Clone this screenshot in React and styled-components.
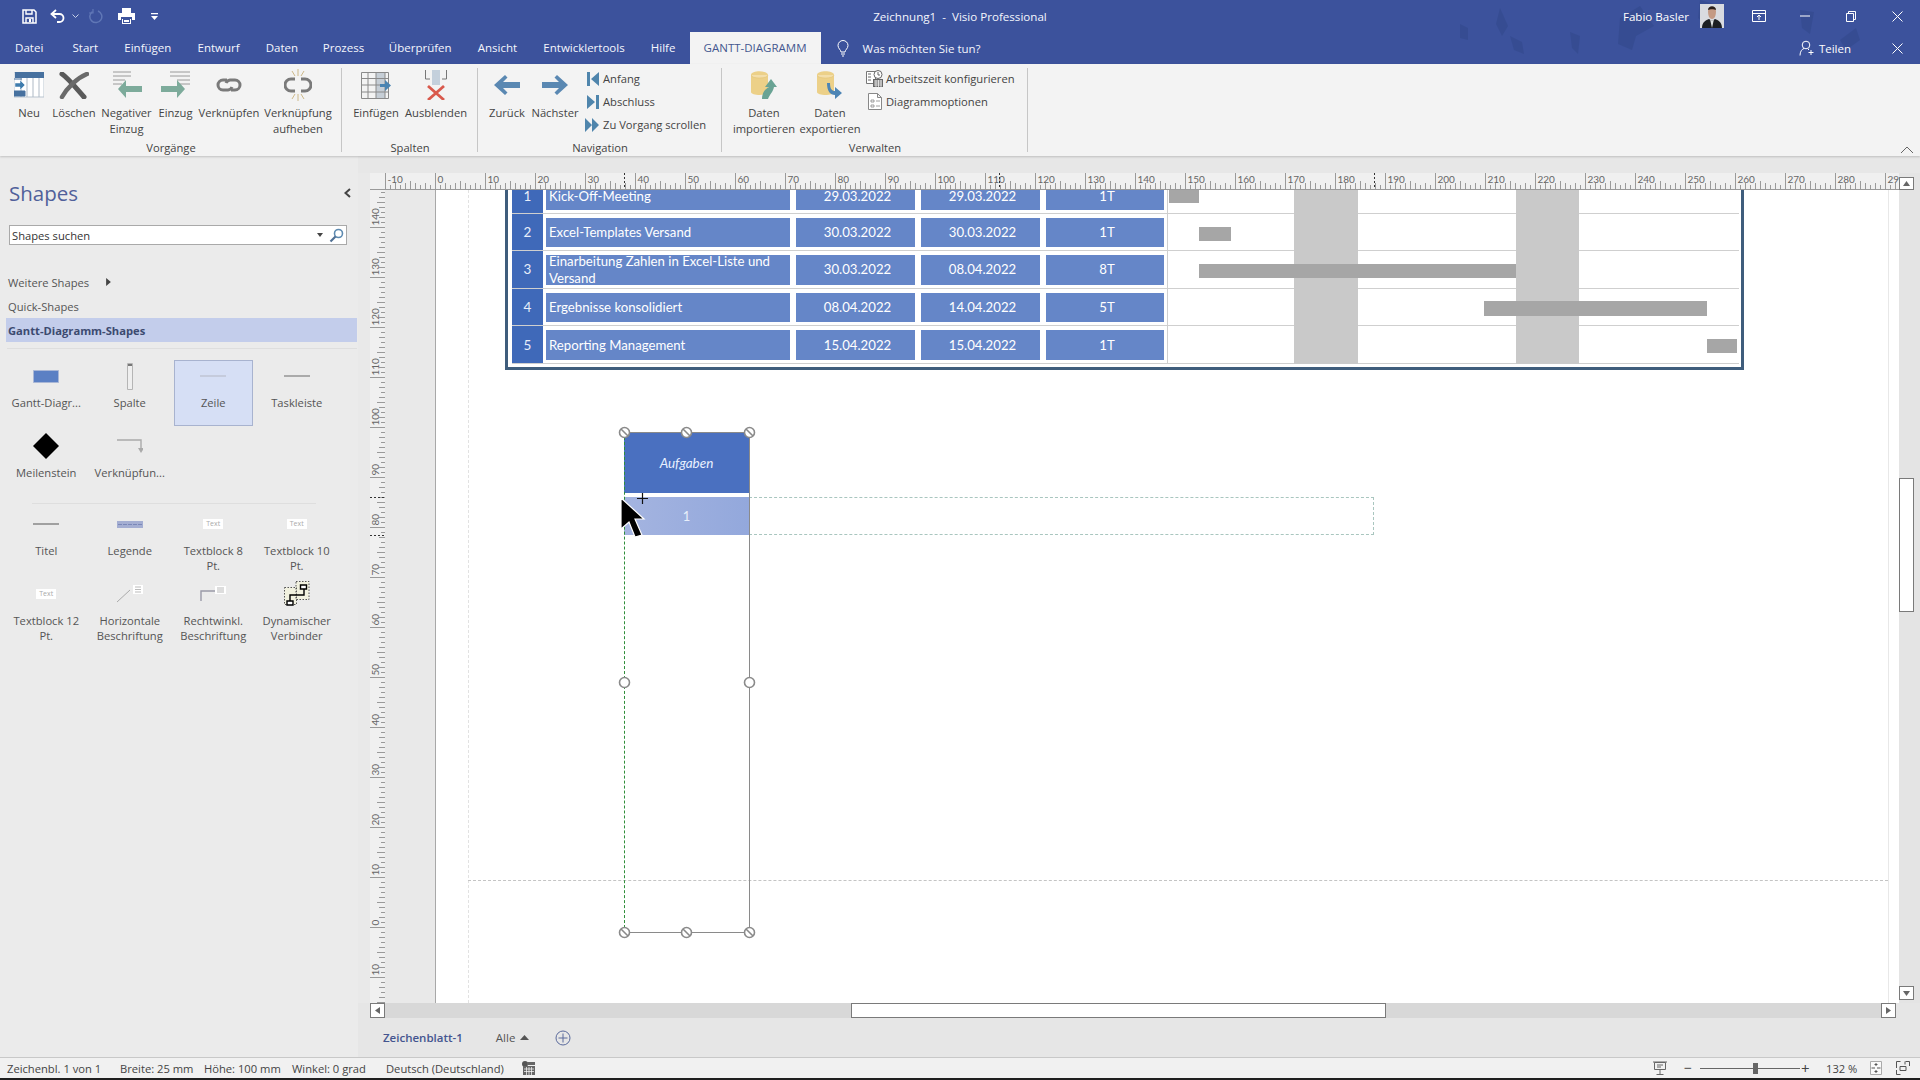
import React from 'react';
import styled, { createGlobalStyle } from 'styled-components';

const GlobalStyle = createGlobalStyle`
  html, body { margin: 0; padding: 0; background: #eaeaea; }
  * { box-sizing: border-box; }
  svg { display: block; }
`;

const UI_FONT = `"Open Sans", "Noto Sans", "Liberation Sans", sans-serif`;
const SHEET_FONT = `Lato, "Open Sans", "Liberation Sans", sans-serif`;

const tabs = ['Datei', 'Start', 'Einfügen', 'Entwurf', 'Daten', 'Prozess', 'Überprüfen', 'Ansicht', 'Entwicklertools', 'Hilfe'];

const rows = [
  { no: 1, name: 'Kick-Off-Meeting', from: '29.03.2022', to: '29.03.2022', dur: '1T' },
  { no: 2, name: 'Excel-Templates Versand', from: '30.03.2022', to: '30.03.2022', dur: '1T' },
  { no: 3, name: 'Einarbeitung Zahlen in Excel-Liste und Versand', from: '30.03.2022', to: '08.04.2022', dur: '8T' },
  { no: 4, name: 'Ergebnisse konsolidiert', from: '08.04.2022', to: '14.04.2022', dur: '5T' },
  { no: 5, name: 'Reporting Management', from: '15.04.2022', to: '15.04.2022', dur: '1T' },
];

// bars and weekend columns, measured from the inner edge of the frame
const shades = [{ x: 786, w: 64 }, { x: 1008, w: 63 }];
const bars = [
  { x: 661, y: 0, w: 30, h: 27 },
  { x: 691, y: 51, w: 32, h: 14 },
  { x: 691, y: 88, w: 317, h: 14 },
  { x: 976, y: 125, w: 223, h: 15 },
  { x: 1199, y: 163, w: 30, h: 14 },
];

const handles = [
  { x: 239, y: 242, locked: true }, { x: 301, y: 242, locked: true }, { x: 364, y: 242, locked: true },
  { x: 239, y: 492 }, { x: 364, y: 492 },
  { x: 239, y: 742, locked: true }, { x: 301, y: 742, locked: true }, { x: 364, y: 742, locked: true },
];

const App = () => (
  <Page>
    <GlobalStyle />
    <Header>
      <Birds width="470" height="64" viewBox="0 0 470 64">
        <g fill="#2f4688" opacity="0.45">
          <path d="M50 8l8 18-6 10-6-12z" /><path d="M10 24l8 4 0 12-8-2z" />
          <path d="M60 36l12 6 2 12-10-4z" /><path d="M120 32l10 4-2 18-6-6z" />
          <path d="M170 18l20-12 14 20-18 10-4 14-14-6z" /><path d="M250 0l14 4-6 22-10-8z" />
          <path d="M350 10l14 2-4 22-8-6z" /><path d="M390 40l16-12 4 12-14 10z" />
        </g>
      </Birds>
      <TitleBar>
        <Qat>
          <QatSlot $ml={0} $w={18}><SaveIcon /></QatSlot>
          <QatSlot $ml={11} $w={18}><UndoIcon /></QatSlot>
          <QatSlot $ml={3} $w={10}><Chevron /></QatSlot>
          <QatSlot $ml={7} $w={18}><RedoIcon /></QatSlot>
          <QatSlot $ml={12} $w={18}><PrintIcon /></QatSlot>
          <QatSlot $ml={14} $w={10}><QatMenu /></QatSlot>
        </Qat>
        <WindowTitle>Zeichnung1  -  Visio Professional</WindowTitle>
        <WindowControls>
          <UserName>Fabio Basler</UserName>
          <AvatarPicture />
          <WinButton $ml={28}><RibbonDisplayIcon /></WinButton>
          <WinButton $ml={32}><MinimizeIcon /></WinButton>
          <WinButton $ml={32}><RestoreIcon /></WinButton>
          <WinButton $ml={32}><CloseIcon /></WinButton>
        </WindowControls>
      </TitleBar>
      <TabBar>
        {tabs.map((t) => <Tab key={t}>{t}</Tab>)}
        <ActiveTab>GANTT-DIAGRAMM</ActiveTab>
        <TellMe><BulbIcon />Was möchten Sie tun?</TellMe>
        <ShareButton><ShareIcon />Teilen</ShareButton>
        <WinButton $ml={39}><CloseIcon /></WinButton>
      </TabBar>
    </Header>

    <Ribbon>
      <Group $w={342} $pl={6}>
        <GroupBody>
          <RibbonButton w={46} label="Neu" icon={<NewIcon />} />
          <RibbonButton w={44} label="Löschen" icon={<DeleteIcon />} />
          <RibbonButton w={61} label={<>Negativer<br />Einzug</>} icon={<OutdentIcon />} />
          <RibbonButton w={37} label="Einzug" icon={<IndentIcon />} />
          <RibbonButton w={70} label="Verknüpfen" icon={<LinkIcon />} />
          <RibbonButton w={68} label={<>Verknüpfung<br />aufheben</>} icon={<UnlinkIcon />} />
        </GroupBody>
        <GroupLabel $pl={6}>Vorgänge</GroupLabel>
      </Group>
      <Group $w={136} $pl={2}>
        <GroupBody>
          <RibbonButton w={64} label="Einfügen" icon={<InsertColumnIcon />} />
          <RibbonButton w={56} label="Ausblenden" icon={<HideColumnIcon />} />
        </GroupBody>
        <GroupLabel $pl={2}>Spalten</GroupLabel>
      </Group>
      <Group $w={244} $pl={6}>
        <GroupBody>
          <RibbonButton w={46} label="Zurück" icon={<BigArrow flip />} />
          <RibbonButton w={50} label="Nächster" icon={<BigArrow />} />
          <Stack $ml={7}>
            <StackItem><StartIcon />Anfang</StackItem>
            <StackItem><FinishIcon />Abschluss</StackItem>
            <StackItem><ScrollIcon />Zu Vorgang scrollen</StackItem>
          </Stack>
        </GroupBody>
        <GroupLabel $pl={6}>Navigation</GroupLabel>
      </Group>
      <Group $w={306} $pl={8}>
        <GroupBody>
          <RibbonButton w={68} label={<>Daten<br />importieren</>} icon={<ImportIcon />} />
          <RibbonButton w={64} label={<>Daten<br />exportieren</>} icon={<ExportIcon />} />
          <Stack $ml={4}>
            <StackItem><WorkTimeIcon />Arbeitszeit konfigurieren</StackItem>
            <StackItem><OptionsIcon />Diagrammoptionen</StackItem>
          </Stack>
        </GroupBody>
        <GroupLabel $pl={8}>Verwalten</GroupLabel>
      </Group>
      <CollapseRibbon>
        <svg width="14" height="8" viewBox="0 0 14 8"><path d="M1 7l6-6 6 6" fill="none" stroke="#666" /></svg>
      </CollapseRibbon>
    </Ribbon>

    <Body>
      <Sidebar>
        <SidebarHead>
          <SidebarTitle>Shapes</SidebarTitle>
          <svg width="10" height="10" viewBox="0 0 10 10"><path d="M7 1L2.500 5 7 9" fill="none" stroke="#444" strokeWidth="2" /></svg>
        </SidebarHead>
        <SearchBox>
          <span>Shapes suchen</span>
          <SearchTools>
            <svg width="6" height="4" viewBox="0 0 6 4"><path d="M0 0h6L3 4z" fill="#444" /></svg>
            <svg width="15" height="15" viewBox="0 0 15 15"><circle cx="9.500" cy="5.500" r="4" fill="none" stroke="#5d8ab0" strokeWidth="1.600" /><path d="M6.500 8.500L1.500 13.500" stroke="#4f6f93" strokeWidth="2.200" /></svg>
          </SearchTools>
        </SearchBox>
        <NavRow $first>Weitere Shapes<MoreArrow viewBox="0 0 6 10"><path d="M0 0l6 5-6 5z" fill="#444" /></MoreArrow></NavRow>
        <NavRow>Quick-Shapes</NavRow>
        <NavRow $active>Gantt-Diagramm-Shapes</NavRow>
        <Divider />
        <StencilGrid>
          <Stencil label="Gantt-Diagr..."><RectShape /></Stencil>
          <Stencil label="Spalte"><ColumnShape /></Stencil>
          <Stencil label="Zeile" selected><LineShape color="#c5cbdc" /></Stencil>
          <Stencil label="Taskleiste"><LineShape color="#aaa" /></Stencil>
          <Stencil label="Meilenstein"><Diamond /></Stencil>
          <Stencil label="Verknüpfun..."><ElbowShape /></Stencil>
        </StencilGrid>
        <InnerDivider />
        <StencilGrid>
          <Stencil label="Titel"><LineShape color="#a0a0a0" /></Stencil>
          <Stencil label="Legende"><LegendShape /></Stencil>
          <Stencil label={<>Textblock 8<br />Pt.</>}><TextChip>Text</TextChip></Stencil>
          <Stencil label={<>Textblock 10<br />Pt.</>}><TextChip>Text</TextChip></Stencil>
          <Stencil label={<>Textblock 12<br />Pt.</>}><TextChip>Text</TextChip></Stencil>
          <Stencil label="Horizontale Beschriftung"><CalloutLine /></Stencil>
          <Stencil label="Rechtwinkl. Beschriftung"><CalloutElbow /></Stencil>
          <Stencil label="Dynamischer Verbinder"><ConnectorShape /></Stencil>
        </StencilGrid>
      </Sidebar>

      <Workspace>
        <TopBand />
        <DrawingArea>
          <Gutter />
          <RulerCorner />
          <HRulerBox><HorizontalRuler /></HRulerBox>
          <VScroll>
            <ScrollButton $h={13} $mt={4}><svg width="7" height="5" viewBox="0 0 7 5"><path d="M0 5l3.500-5L7 5z" fill="#666" /></svg></ScrollButton>
            <VThumb />
            <ScrollButton $h={14} $mt="auto" $mb={3}><svg width="7" height="5" viewBox="0 0 7 5"><path d="M0 0l3.500 5L7 0z" fill="#666" /></svg></ScrollButton>
          </VScroll>
          <VRulerBox><VerticalRuler /></VRulerBox>
          <Canvas>
            <Sheet />
            <PageLineV />
            <PageEdgeV />
            <PageLineH />
            <GanttFrame>
              {rows.map((r) => (
                <GanttRow key={r.no}>
                  <NumberCell>{r.no}</NumberCell>
                  <NameCell>{r.name}</NameCell>
                  <DataCell>{r.from}</DataCell>
                  <DataCell>{r.to}</DataCell>
                  <DataCell>{r.dur}</DataCell>
                  <ChartCell />
                </GanttRow>
              ))}
              {shades.map((s) => <Weekend key={s.x} $x={s.x} $w={s.w} />)}
              {bars.map((b) => <TaskBar key={b.x} $x={b.x} $y={b.y} $w={b.w} $h={b.h} />)}
            </GanttFrame>
            <ShapeHeader>Aufgaben</ShapeHeader>
            <ShapeRow>1</ShapeRow>
            <DropHint />
            <Selection />
            {handles.map((h) => (
              <Handle key={`${h.x}-${h.y}`} $x={h.x} $y={h.y} width="13" height="13" viewBox="0 0 13 13">
                <circle cx="6.500" cy="6.500" r="5" fill="#fff" stroke="#8a8a8a" strokeWidth="1.600" />
                {h.locked && <path d="M3 3l7 7" stroke="#8a8a8a" strokeWidth="1.600" />}
              </Handle>
            ))}
            <DragPlus width="11" height="11" viewBox="0 0 11 11"><path d="M5.500 0v11M0 5.500h11" stroke="#111" strokeWidth="1.200" /></DragPlus>
            <Cursor width="26" height="42" viewBox="0 0 26 42">
              <path d="M1 1v31l8-7 6 15 7-2-7-16h9z" fill="#000" stroke="#fff" strokeWidth="1.200" />
            </Cursor>
          </Canvas>
        </DrawingArea>
        <HScroll>
          <ScrollButton $w={15}><svg width="5" height="7" viewBox="0 0 5 7"><path d="M5 0L0 3.500 5 7z" fill="#666" /></svg></ScrollButton>
          <HThumb />
          <ScrollButton $w={15} $ml="auto"><svg width="5" height="7" viewBox="0 0 5 7"><path d="M0 0l5 3.500L0 7z" fill="#666" /></svg></ScrollButton>
        </HScroll>
        <SheetTabs>
          <SheetTab>Zeichenblatt-1</SheetTab>
          <AllTab>Alle<svg width="9" height="5" viewBox="0 0 9 5"><path d="M0 5l4.500-5L9 5z" fill="#555" /></svg></AllTab>
          <AddSheet width="16" height="16" viewBox="0 0 16 16">
            <circle cx="8" cy="8" r="7" fill="none" stroke="#5a6a9c" />
            <path d="M8 3.500v9M3.500 8h9" stroke="#5a6a9c" />
          </AddSheet>
        </SheetTabs>
      </Workspace>
    </Body>

    <StatusBar>
      <StatusText $w={113}>Zeichenbl. 1 von 1</StatusText>
      <StatusText $w={84}>Breite: 25 mm</StatusText>
      <StatusText $w={88}>Höhe: 100 mm</StatusText>
      <StatusText $w={94}>Winkel: 0 grad</StatusText>
      <StatusText $w={135}>Deutsch (Deutschland)</StatusText>
      <MacroIcon />
      <StatusRight>
        <PresentIcon />
        <ZoomMinus>−</ZoomMinus>
        <ZoomSlider><ZoomThumb /></ZoomSlider>
        <ZoomPlus>+</ZoomPlus>
        <ZoomValue>132 %</ZoomValue>
        <FitIcon />
        <SwitchIcon />
      </StatusRight>
    </StatusBar>
    <BottomEdge />
  </Page>
);

const RibbonButton = ({ w, label, icon }) => (
  <RibbonBtn $w={w}>
    <IconSlot>{icon}</IconSlot>
    <BtnLabel>{label}</BtnLabel>
  </RibbonBtn>
);

const Stencil = ({ label, selected, children }) => (
  <StencilCell $selected={selected}>
    <StencilIcon>{children}</StencilIcon>
    <StencilLabel>{label}</StencilLabel>
  </StencilCell>
);

const HorizontalRuler = () => {
  const ticks = [];
  for (let i = 0; i <= 303; i++) {
    const x = i * 5 + 0.5;
    const major = i % 10 === 0;
    const h = major ? 17 : i % 5 === 0 ? 9 : i % 2 === 0 ? 7 : 5;
    ticks.push(<path key={i} d={`M${x} 17v-${h}`} stroke="#9a9a9a" strokeWidth="1" />);
    if (major) {
      ticks.push(<RulerText key={`t${i}`} x={x + 2} y="10">{i - 10}</RulerText>);
    }
  }
  return (
    <svg width="1514" height="17" viewBox="0 0 1514 17">
      {ticks}
      {[239, 614, 989].map((x) => <path key={x} d={`M${x + 0.5} 0v17`} stroke="#333" strokeDasharray="2 2" />)}
    </svg>
  );
};

const VerticalRuler = () => {
  const ticks = [];
  for (let v = -15; v <= 147; v += 1) {
    const y = 737 - v * 5 + 0.5;
    const major = v % 10 === 0;
    const w = major ? 15 : v % 5 === 0 ? 8 : v % 2 === 0 ? 6 : 4;
    ticks.push(<path key={v} d={`M15 ${y}h-${w}`} stroke="#9a9a9a" strokeWidth="1" />);
    if (major) {
      ticks.push(<RulerText key={`t${v}`} transform={`translate(9 ${y - 2}) rotate(-90)`}>{Math.abs(v)}</RulerText>);
    }
  }
  return (
    <svg width="15" height="813" viewBox="0 0 15 813">
      {ticks}
      <path d="M0 307.500h15M0 345.500h15" stroke="#333" strokeDasharray="2 2" />
    </svg>
  );
};

const AvatarPicture = () => (
  <AvatarSvg width="24" height="24" viewBox="0 0 24 24">
    <path d="M0 0h24v24H0z" fill="#d9dbe0" />
    <path d="M2 24c0-6 4-8 7-9l3 2 3-2c3 1 7 3 7 9z" fill="#1c1f23" />
    <path d="M10 15l2 9 2-9-2 2z" fill="#dfe3e4" />
    <path d="M8 7c0-4 8-4 8 0 0 4-1 8-4 8s-4-4-4-8z" fill="#c49a84" />
    <path d="M8 6c0-5 8-5 8 0-2-1-6-1-8 0z" fill="#2a1f1a" />
  </AvatarSvg>
);

const SaveIcon = () => (
  <svg width="15" height="15" viewBox="0 0 15 15"><path d="M1 1h11l2 2v11H1z" fill="none" stroke="#fff" strokeWidth="1.500" /><path d="M4 1v4h6V1M4 14V9h7v5" fill="none" stroke="#fff" strokeWidth="1.400" /><path d="M7 10h2v3H7z" fill="#fff" /></svg>
);
const UndoIcon = () => (
  <svg width="16" height="15" viewBox="0 0 16 15"><path d="M3 5h6.500a4 4 0 0 1 0 8H7" fill="none" stroke="#fff" strokeWidth="1.800" /><path d="M6 1L1.500 5 6 9" fill="none" stroke="#fff" strokeWidth="1.800" /></svg>
);
const Chevron = () => (
  <svg width="7" height="4" viewBox="0 0 7 4"><path d="M.5.5l3 3 3-3" fill="none" stroke="#c6d0e8" /></svg>
);
const RedoIcon = () => (
  <svg width="14" height="15" viewBox="0 0 14 15"><path d="M9 2a6 6 0 1 1-5.500.6" fill="none" stroke="#6077b6" strokeWidth="1.500" /><path d="M4 0v4H0" fill="none" stroke="#6077b6" strokeWidth="1.200" /></svg>
);
const PrintIcon = () => (
  <svg width="17" height="16" viewBox="0 0 17 16"><path d="M4 0h9v5H4zM4 11h9v5H4z" fill="#fff" /><path d="M0 5h17v7h-3V9H3v3H0z" fill="#fff" /><path d="M5 11h7v4H5z" fill="#3c539c" /><path d="M6 12h5v2H6z" fill="#fff" /></svg>
);
const QatMenu = () => (
  <svg width="7" height="7" viewBox="0 0 7 7"><path d="M0 0h7v1.300H0zM0 3h7L3.500 7z" fill="#fff" /></svg>
);
const RibbonDisplayIcon = () => (
  <svg width="14" height="12" viewBox="0 0 14 12"><path d="M.5.5h13v11H.5zM.5 3.500h13M7 10V5M5 7l2-2 2 2" fill="none" stroke="#fff" /></svg>
);
const MinimizeIcon = () => (
  <svg width="10" height="2" viewBox="0 0 10 2"><path d="M0 1h10" stroke="#fff" /></svg>
);
const RestoreIcon = () => (
  <svg width="10" height="11" viewBox="0 0 10 11"><path d="M.5 2.500h7v8h-7zM2.500 2.500V.5h7v8h-2" fill="none" stroke="#fff" /></svg>
);
const CloseIcon = () => (
  <svg width="11" height="11" viewBox="0 0 11 11"><path d="M.5.5l10 10M10.500.5l-10 10" stroke="#fff" /></svg>
);
const BulbIcon = () => (
  <svg width="12" height="17" viewBox="0 0 12 17"><path d="M4 12c0-2-3-3.500-3-6.500a5 5 0 0 1 10 0C11 8.500 8 10 8 12zM4 14h4M5 16h2" fill="none" stroke="#fff" /></svg>
);
const ShareIcon = () => (
  <svg width="16" height="16" viewBox="0 0 16 16"><circle cx="7" cy="5" r="3.800" fill="none" stroke="#fff" /><path d="M1 15.500c0-4 2-6.500 4-7M9 9l1 1M12 10v5M9.500 12.500h5" fill="none" stroke="#fff" /></svg>
);

const NewIcon = () => (
  <svg width="30" height="26" viewBox="0 0 30 26">
    <path d="M0 0h30v25H0z" fill="#fff" stroke="#b9c4cf" />
    <path d="M1 0h29v6H1z" fill="#47719f" />
    <path d="M7 6v19M13 6v19M19 6v19M25 6v19" stroke="#aeb9c5" />
    <path d="M0 7h8M0 19h11v5H0z" fill="#47719f" stroke="#47719f" />
    <path d="M1 11h5V8l5 5-5 5v-3H1z" fill="#3f7cad" stroke="#fff" strokeWidth=".5" />
  </svg>
);
const DeleteIcon = () => (
  <svg width="30" height="27" viewBox="0 0 30 27"><path d="M3 2c6 4 14 14 22 23" fill="none" stroke="#5a5a5a" strokeWidth="5" strokeLinecap="round" /><path d="M28 2C18 6 8 16 3 25" fill="none" stroke="#6a6a6a" strokeWidth="4.500" strokeLinecap="round" /></svg>
);
const OutdentIcon = () => (
  <svg width="30" height="29" viewBox="0 0 30 29"><path d="M1 1h18M1 5h18M1 9h12M1 13h9" stroke="#9a9a9a" /><path d="M14 9l-8 9 8 9v-6h16v-6H14z" fill="#7dab9b" /></svg>
);
const IndentIcon = () => (
  <svg width="30" height="29" viewBox="0 0 30 29"><path d="M9 1h20M9 5h20M16 9h13M18 13h11" stroke="#9a9a9a" /><path d="M16 9l8 9-8 9v-6H0v-6h16z" fill="#7dab9b" /></svg>
);
const LinkIcon = () => (
  <svg width="28" height="16" viewBox="0 0 28 16"><path d="M12 3H8a5 5 0 0 0 0 10h5a5 5 0 0 0 4-3" fill="none" stroke="#7a7a7a" strokeWidth="3" /><path d="M16 13h4a5 5 0 0 0 0-10h-5a5 5 0 0 0-4 3" fill="none" stroke="#7a7a7a" strokeWidth="3" /></svg>
);
const UnlinkIcon = () => (
  <svg width="28" height="32" viewBox="0 0 28 32"><path d="M11 10H7a5.500 5.500 0 0 0 0 12h4M17 10h4a5.500 5.500 0 0 1 0 12h-4" fill="none" stroke="#7a7a7a" strokeWidth="3" /><path d="M14 0v7M8 2l3 5M20 2l-3 5M14 25v7M8 30l3-5M20 30l-3-5" stroke="#cdb98a" /></svg>
);
const InsertColumnIcon = () => (
  <svg width="30" height="27" viewBox="0 0 30 27">
    <path d="M15 1h9v25h-9z" fill="#c6ced6" />
    <path d="M.5.5h27v26H.5zM.5 6.500h27M.5 13h27M.5 20h27M7 .5v26M15 .5v26M24 .5v26" fill="none" stroke="#8a8a8a" />
    <path d="M19 12h5V8l6 5.500-6 5.500v-4h-5z" fill="#4a84b2" />
  </svg>
);
const HideColumnIcon = () => (
  <svg width="26" height="30" viewBox="0 0 26 30">
    <path d="M9 0h8v15H9z" fill="#c4d0dc" />
    <path d="M2.500 0v9H7M23.500 0v9H19" fill="none" stroke="#777" />
    <path d="M5 16l16 14M21 16L5 30" stroke="#d9594c" strokeWidth="2.800" />
  </svg>
);
const BigArrow = ({ flip }) => (
  <ArrowSvg $flip={flip} width="26" height="20" viewBox="0 0 26 20">
    <path d="M15 0l11 10-11 10-2.500-2.500L17 13H0V7h17l-4.500-4.500z" fill="#5a88b2" />
  </ArrowSvg>
);
const StartIcon = () => (
  <StackGlyph width="12" height="14" viewBox="0 0 12 14"><path d="M0 0h3v14H0zM12 0v14L4 7z" fill="#4f85ac" /></StackGlyph>
);
const FinishIcon = () => (
  <StackGlyph width="12" height="14" viewBox="0 0 12 14"><path d="M9 0h3v14H9zM0 0v14l8-7z" fill="#4f85ac" /></StackGlyph>
);
const ScrollIcon = () => (
  <StackGlyph $ml={-2} width="14" height="14" viewBox="0 0 14 14"><path d="M0 0v14l7-7zM7 0v14l7-7z" fill="#4f85ac" /></StackGlyph>
);
const Cylinder = () => (
  <>
    <path d="M0 4c0-5 17-5 17 0v17c0 4-17 4-17 0z" fill="#ecd088" />
    <path d="M0 4c0 4 17 4 17 0" fill="#f3deaa" stroke="#e2c374" strokeWidth=".6" />
  </>
);
const ImportIcon = () => (
  <svg width="26" height="30" viewBox="0 0 26 30"><g transform="translate(0 1)"><Cylinder /></g><path d="M11 29c0-6 3-10 7-12h-4l6-8 6 8h-3c-1 5-4 7-6 12z" fill="#69a394" /></svg>
);
const ExportIcon = () => (
  <svg width="26" height="30" viewBox="0 0 26 30"><g transform="translate(0 1)"><Cylinder /></g><path d="M13 13c0 6 2 8 5 8v-4l7 6-7 6v-4c-5 0-8-4-8-12z" fill="#4d85b5" /></svg>
);
const WorkTimeIcon = () => (
  <StackGlyph $mr={0} width="17" height="17" viewBox="0 0 17 17">
    <path d="M.5 1.500h9v12h-9z" fill="#fff" stroke="#777" />
    <path d="M2 4h3M2 7h3M2 10h3" stroke="#666" />
    <circle cx="12" cy="4.500" r="4" fill="#fff" stroke="#666" />
    <path d="M12 2v3h2" fill="none" stroke="#666" />
    <path d="M7 9h10v8H7z" fill="#666" />
    <path d="M8 11h8M8 13h8M8 15h8M10 10v7M12.500 10v7M15 10v7" stroke="#fff" strokeWidth=".7" />
  </StackGlyph>
);
const OptionsIcon = () => (
  <StackGlyph $ml={2} $mr={1} width="14" height="17" viewBox="0 0 14 17"><path d="M.5.5h9l4 4v12H.5zM9.500.5v4h4" fill="#fff" stroke="#888" /><path d="M3 7h3v2H3zM3 12h3v2H3zM8 8h4M8 13h4" fill="none" stroke="#888" strokeWidth=".8" /></StackGlyph>
);

const RectShape = () => (
  <svg width="26" height="13" viewBox="0 0 26 13"><path d="M.5.5h25v12H.5z" fill="#5b80c4" stroke="#a9b7d6" /></svg>
);
const ColumnShape = () => (
  <svg width="8" height="27" viewBox="0 0 8 27"><path d="M1.500.5h5v26h-5z" fill="#efefef" stroke="#b5b5b5" /><path d="M2 1h4v2H2z" fill="#777" /></svg>
);
const LineShape = ({ color }) => (
  <svg width="26" height="2" viewBox="0 0 26 2"><path d="M0 1h26" stroke={color} strokeWidth="2" /></svg>
);
const Diamond = () => (
  <svg width="26" height="26" viewBox="0 0 26 26"><path d="M13 0l13 13-13 13L0 13z" fill="#000" /></svg>
);
const ElbowShape = () => (
  <svg width="26" height="14" viewBox="0 0 26 14"><path d="M0 1h24v11" fill="none" stroke="#aaa" strokeWidth="1.400" /><path d="M21 9h6l-3 5z" fill="#aaa" /></svg>
);
const LegendShape = () => (
  <svg width="26" height="7" viewBox="0 0 26 7"><path d="M0 0h26v7H0z" fill="#a4aed2" /><path d="M1 3.500h24" stroke="#7b88b8" strokeDasharray="4 1" /></svg>
);
const CalloutLine = () => (
  <svg width="26" height="18" viewBox="0 0 26 18"><path d="M0 17L13 5" stroke="#aaa" /><path d="M16 0h10v9H16z" fill="#fff" /><path d="M18 2h6M18 4.500h6M18 7h6" stroke="#bbb" /></svg>
);
const CalloutElbow = () => (
  <svg width="26" height="16" viewBox="0 0 26 16"><path d="M1 15V5h14" fill="none" stroke="#9a9aa8" strokeWidth="1.400" /><path d="M15 0h11v8H15z" fill="#fff" /><path d="M17 2h7M17 4h7M17 6h7" stroke="#bbb" /></svg>
);
const ConnectorShape = () => (
  <svg width="26" height="27" viewBox="0 0 26 27">
    <path d="M.5 6.500h12v17H.5zM12 .5h13v18H12z" fill="#f1f1df" stroke="#555" strokeDasharray="1.500 1.500" />
    <path d="M20 7v7H6v7" fill="none" stroke="#000" strokeWidth="1.400" />
    <path d="M16.500 4h6v4h-6zM3 20h6v4H3z" fill="#fff" stroke="#000" strokeWidth="1.400" />
  </svg>
);

const MacroIcon = () => (
  <MacroSvg width="13" height="14" viewBox="0 0 13 14"><circle cx="3" cy="3" r="3" fill="#555" /><path d="M5 1h8v3H5zM1 5h12v9H1z" fill="#666" /><path d="M2 8h10M2 10.500h10M4.500 6v8M7 6v8M9.500 6v8" stroke="#fff" strokeWidth=".7" /></MacroSvg>
);
const PresentIcon = () => (
  <svg width="14" height="14" viewBox="0 0 14 14"><path d="M0 1h14M1.500 1.500h11v7h-11zM7 9v4M3.500 13.500h7M4 4h6M4 6h4" fill="none" stroke="#666" /></svg>
);
const FitIcon = () => (
  <StatusGlyph $ml={0} width="12" height="14" viewBox="0 0 12 14"><path d="M.5.5h11v13H.5z" fill="#fafafa" stroke="#aaa" /><path d="M6 2v3M4.500 3.500h3M6 9v3M4.500 10.500h3M1.500 7H5M7 7h3.500" stroke="#555" /></StatusGlyph>
);
const SwitchIcon = () => (
  <StatusGlyph $ml={14} width="14" height="14" viewBox="0 0 14 14"><path d="M.5 5V.5h4M9.500.5h4V5M.5 9v4.500h4M4 5.500h6v4H4zM9 .5v3M.5 7V5" fill="none" stroke="#555" /></StatusGlyph>
);

const Page = styled.div`
  width: 1920px;
  height: 1080px;
  overflow: hidden;
  display: flex;
  flex-direction: column;
  background: #eaeaea;
  font-family: ${UI_FONT};
  color: #444;
`;

const Header = styled.header`
  position: relative;
  height: 64px;
  background: #3c529c;
  color: #fff;
  flex: none;
`;

const Birds = styled.svg`
  position: absolute;
  top: 0;
  left: 1450px;
`;

const TitleBar = styled.div`
  position: relative;
  height: 32px;
  display: grid;
  grid-template-columns: 1fr auto 1fr;
  align-items: center;
`;

const Qat = styled.div`
  display: flex;
  align-items: center;
  padding-left: 20px;
`;

const QatSlot = styled.div`
  width: ${(p) => p.$w}px;
  margin-left: ${(p) => p.$ml}px;
  display: flex;
  justify-content: center;
`;

const WindowTitle = styled.div`
  font-size: 11.6px;
  white-space: pre;
  color: #f4f6fc;
`;

const WindowControls = styled.div`
  display: flex;
  align-items: center;
  justify-content: flex-end;
  padding-right: 16px;
`;

const UserName = styled.span`
  font-size: 11.6px;
`;

const AvatarSvg = styled.svg`
  margin-left: 11px;
`;

const WinButton = styled.div`
  width: 14px;
  margin-left: ${(p) => p.$ml}px;
  display: flex;
  justify-content: center;
`;

const TabBar = styled.nav`
  position: relative;
  height: 32px;
  display: flex;
  align-items: center;
  padding: 0 16px 0 2px;
`;

const Tab = styled.div`
  padding: 0 13.1px;
  font-size: 11.5px;
  line-height: 32px;
  color: #f4f6fc;
  &:first-child {
    margin-right: 3px;
  }
  &:nth-child(6), &:nth-child(7) {
    margin-left: -1.5px;
  }
`;

const ActiveTab = styled.div`
  width: 131px;
  height: 32px;
  margin-left: 1px;
  background: #f3f3f3;
  color: #44578f;
  font-size: 11.5px;
  line-height: 32px;
  text-align: center;
`;

const TellMe = styled.div`
  display: flex;
  align-items: center;
  gap: 14px;
  margin-left: 16px;
  font-size: 11.5px;
  color: #f4f6fc;
`;

const ShareButton = styled.div`
  display: flex;
  align-items: center;
  gap: 4px;
  margin-left: auto;
  font-size: 11.5px;
`;

const Ribbon = styled.section`
  position: relative;
  height: 92px;
  flex: none;
  display: flex;
  background: #f3f3f3;
  box-shadow: 0 1px 2px rgba(0, 0, 0, 0.18);
  z-index: 2;
`;

const Group = styled.div`
  position: relative;
  width: ${(p) => p.$w}px;
  padding: 4px 0 0 ${(p) => p.$pl}px;
  display: flex;
  flex-direction: column;
  &::after {
    content: '';
    position: absolute;
    top: 4px;
    bottom: 4px;
    right: 0;
    width: 1px;
    background: #c6c6c6;
  }
`;

const GroupBody = styled.div`
  flex: 1;
  display: flex;
`;

const GroupLabel = styled.div`
  height: 16px;
  margin-left: -${(p) => p.$pl}px;
  font-size: 11.2px;
  line-height: 16px;
  text-align: center;
  color: #444;
`;

const RibbonBtn = styled.div`
  width: ${(p) => p.$w}px;
  flex: none;
  display: flex;
  flex-direction: column;
  align-items: center;
`;

const IconSlot = styled.div`
  height: 34px;
  margin-bottom: 3px;
  display: flex;
  align-items: center;
  justify-content: center;
`;

const BtnLabel = styled.div`
  font-size: 11.2px;
  line-height: 16px;
  text-align: center;
  white-space: nowrap;
  color: #444;
`;

const ArrowSvg = styled.svg`
  transform: ${(p) => (p.$flip ? 'scaleX(-1)' : 'none')};
`;

const Stack = styled.div`
  margin: -1px 0 0 ${(p) => p.$ml}px;
  display: flex;
  flex-direction: column;
`;

const StackItem = styled.div`
  height: 23px;
  display: flex;
  align-items: center;
  gap: 3px;
  font-size: 11.2px;
  white-space: nowrap;
  color: #444;
`;

const StackGlyph = styled.svg`
  flex: none;
  margin-left: ${(p) => p.$ml || 0}px;
  margin-right: ${(p) => (p.$mr === undefined ? 1 : p.$mr)}px;
`;

const CollapseRibbon = styled.div`
  margin: auto 6px 2px auto;
`;

const Body = styled.div`
  flex: 1;
  min-height: 0;
  display: flex;
`;

const Sidebar = styled.aside`
  width: 358px;
  flex: none;
  background: #ebebeb;
`;

const SidebarHead = styled.div`
  display: flex;
  align-items: center;
  justify-content: space-between;
  padding: 20px 5px 0 9px;
`;

const SidebarTitle = styled.div`
  font-size: 20.5px;
  line-height: 34px;
  color: #50609a;
`;

const SearchBox = styled.div`
  height: 20px;
  margin: 15px 11px 0 9px;
  padding: 0 2px 0 2px;
  display: flex;
  align-items: center;
  justify-content: space-between;
  border: 1px solid #a9a9a9;
  background: #fff;
  font-size: 11.2px;
  color: #333;
`;

const SearchTools = styled.div`
  display: flex;
  align-items: center;
  gap: 6.500px;
`;

const NavRow = styled.div`
  height: 24px;
  margin: ${(p) => (p.$first ? '25px' : '0')} 1px 0 6px;
  padding-left: 2px;
  display: flex;
  align-items: center;
  font-size: 11.2px;
  font-weight: ${(p) => (p.$active ? 700 : 400)};
  background: ${(p) => (p.$active ? '#c3cdeb' : 'transparent')};
  color: ${(p) => (p.$active ? '#3c4a70' : '#555')};
`;

const MoreArrow = styled.svg`
  width: 5px;
  height: 8px;
  margin-left: 17px;
`;

const Divider = styled.div`
  height: 1px;
  margin: 6px 1px 0 7px;
  background: #dedede;
`;

const StencilGrid = styled.div`
  margin-top: 11px;
  padding-left: 4.500px;
  display: grid;
  grid-template-columns: repeat(4, 83.500px);
  grid-auto-rows: 70px;
`;

const StencilCell = styled.div`
  height: 66px;
  margin: 0 2px;
  border: 1px solid ${(p) => (p.$selected ? '#a8b3cf' : 'transparent')};
  background: ${(p) => (p.$selected ? '#d6dff5' : 'transparent')};
`;

const StencilIcon = styled.div`
  height: 30px;
  display: flex;
  align-items: center;
  justify-content: center;
`;

const StencilLabel = styled.div`
  margin-top: 3.500px;
  font-size: 11.2px;
  line-height: 15px;
  text-align: center;
  color: #555;
`;

const TextChip = styled.div`
  padding: 0 3px;
  background: #fff;
  font-size: 7px;
  line-height: 10px;
  color: #aaa;
`;

const InnerDivider = styled.div`
  height: 1px;
  margin: 3px 42px 0 32px;
  background: #dedede;
  & + div {
    margin-top: 4px;
  }
`;

const Workspace = styled.main`
  flex: 1;
  min-width: 0;
  display: flex;
  flex-direction: column;
  background: #e6e6e6;
`;

const TopBand = styled.div`
  height: 17px;
  background: #e7e7e7;
`;

const DrawingArea = styled.div`
  height: 830px;
  display: grid;
  grid-template-columns: 12px 15px 1514px 21px;
  grid-template-rows: 17px 813px;
`;

const Gutter = styled.div`
  grid-row: 1 / 3;
  background: #e9e9e9;
`;

const RulerCorner = styled.div`
  background: #f0f0f0;
  border-bottom: 1px solid #9a9a9a;
`;

const HRulerBox = styled.div`
  background: #f0f0f0;
  border-bottom: 1px solid #9a9a9a;
  overflow: hidden;
`;

const RulerText = styled.text`
  font-family: ${SHEET_FONT};
  font-size: 10px;
  fill: #666;
`;

const VScroll = styled.div`
  grid-row: 1 / 3;
  grid-column: 4;
  background: #e4e4e4;
  display: flex;
  flex-direction: column;
  align-items: flex-start;
`;

const ScrollButton = styled.div`
  width: ${(p) => p.$w || 15}px;
  height: ${(p) => p.$h || 15}px;
  margin-top: ${(p) => (p.$mt === 'auto' ? 'auto' : `${p.$mt || 0}px`)};
  margin-bottom: ${(p) => p.$mb || 0}px;
  margin-left: ${(p) => (p.$ml === 'auto' ? 'auto' : '0')};
  flex: none;
  display: flex;
  align-items: center;
  justify-content: center;
  background: #fff;
  border: 1px solid #7a7a7a;
`;

const VThumb = styled.div`
  width: 15px;
  height: 134px;
  margin-top: 288px;
  background: #fff;
  border: 1px solid #7a7a7a;
`;

const VRulerBox = styled.div`
  grid-column: 2;
  background: #f0f0f0;
  overflow: hidden;
`;

const Canvas = styled.div`
  position: relative;
  overflow: hidden;
  background: #e9e9e9;
`;

const Sheet = styled.div`
  position: absolute;
  top: 0;
  bottom: 0;
  left: 50px;
  right: 0;
  background: #fff;
  border-left: 1px solid #a8a8a8;
`;

const PageLineV = styled.div`
  position: absolute;
  top: 0;
  bottom: 0;
  left: 83px;
  border-left: 1px dashed #e2e2e2;
`;

const PageEdgeV = styled.div`
  position: absolute;
  top: 0;
  bottom: 0;
  left: 1503px;
  border-left: 1px solid #e8e8e8;
`;

const PageLineH = styled.div`
  position: absolute;
  left: 83px;
  width: 1420px;
  top: 690px;
  border-top: 1px dashed #c4c4c4;
`;

const GanttFrame = styled.div`
  position: absolute;
  left: 120px;
  top: -17px;
  width: 1239px;
  padding: 0 2px 3px 4px;
  background: #fff;
  border: 3px solid #3f5d7c;
`;

const GanttRow = styled.div`
  height: 37.600px;
  display: grid;
  grid-template-columns: 31px 250px 125px 125px 124px 1fr;
  grid-template-rows: minmax(0, 1fr);
  border-bottom: 1px solid #cfcfcf;
  &:first-child > div {
    padding-top: 3px;
  }
`;

const NumberCell = styled.div`
  display: flex;
  align-items: center;
  justify-content: center;
  background: #3f69b9;
  color: #e8eefa;
  font-family: ${SHEET_FONT};
  font-size: 13.500px;
`;

const NameCell = styled.div`
  margin: 4px 3px 3px;
  padding-left: 3px;
  display: flex;
  align-items: center;
  background: #6586c8;
  color: #fff;
  font-family: ${SHEET_FONT};
  font-size: 13.200px;
  line-height: 17px;
`;

const DataCell = styled(NameCell)`
  padding-left: 4px;
  justify-content: center;
`;

const ChartCell = styled.div`
  border-left: 1px solid #cfcfcf;
`;

const Weekend = styled.div`
  position: absolute;
  top: 0;
  bottom: 3px;
  left: ${(p) => p.$x}px;
  width: ${(p) => p.$w}px;
  background: #c9c9c9;
`;

const TaskBar = styled.div`
  position: absolute;
  left: ${(p) => p.$x}px;
  top: ${(p) => p.$y}px;
  width: ${(p) => p.$w}px;
  height: ${(p) => p.$h}px;
  background: #a6a6a6;
`;

const ShapeHeader = styled.div`
  position: absolute;
  left: 239px;
  top: 243px;
  width: 125px;
  height: 60px;
  display: flex;
  align-items: center;
  justify-content: center;
  background: #4a70c0;
  color: #e9f0ff;
  font-family: ${SHEET_FONT};
  font-size: 13.500px;
  font-style: italic;
`;

const ShapeRow = styled.div`
  position: absolute;
  left: 239px;
  top: 307px;
  width: 125px;
  height: 38px;
  display: flex;
  align-items: center;
  justify-content: center;
  background: linear-gradient(90deg, #a4b4e0, #93a8dc);
  color: #e8eefa;
  font-family: ${SHEET_FONT};
  font-size: 13px;
`;

const DropHint = styled.div`
  position: absolute;
  left: 364px;
  top: 307px;
  width: 625px;
  height: 38px;
  border: 1px dashed #a9c6bf;
  border-left: 0;
`;

const Selection = styled.div`
  position: absolute;
  left: 239px;
  top: 242px;
  width: 126px;
  height: 501px;
  border: 1px solid #8a8a8a;
  border-left: 1px dashed #2f8f3a;
`;

const Handle = styled.svg`
  position: absolute;
  left: ${(p) => p.$x - 6}px;
  top: ${(p) => p.$y - 6}px;
`;

const DragPlus = styled.svg`
  position: absolute;
  left: 252px;
  top: 303px;
`;

const Cursor = styled.svg`
  position: absolute;
  left: 235px;
  top: 307px;
`;

const HScroll = styled.div`
  height: 15px;
  margin-left: 12px;
  width: 1526px;
  display: flex;
  background: #d8d8d8;
`;

const HThumb = styled.div`
  width: 535px;
  height: 15px;
  margin-left: 466px;
  background: #fff;
  border: 1px solid #7a7a7a;
`;

const SheetTabs = styled.div`
  flex: 1;
  padding-left: 25px;
  display: flex;
  align-items: center;
  background: #e6e6e6;
`;

const SheetTab = styled.div`
  font-size: 11.500px;
  font-weight: 600;
  color: #44558f;
`;

const AllTab = styled.div`
  margin-left: 33px;
  display: flex;
  align-items: center;
  gap: 5px;
  font-size: 11.500px;
  color: #555;
`;

const AddSheet = styled.svg`
  margin-left: 26px;
`;

const StatusBar = styled.footer`
  height: 21px;
  flex: none;
  padding-left: 7px;
  display: flex;
  align-items: center;
  background: #f1f1f1;
  border-top: 1px solid #c8c8c8;
  font-size: 11.200px;
  color: #444;
`;

const StatusText = styled.div`
  width: ${(p) => p.$w}px;
  flex: none;
  white-space: nowrap;
`;

const MacroSvg = styled.svg`
  margin-left: 1px;
`;

const StatusRight = styled.div`
  margin-left: auto;
  padding-right: 10px;
  display: flex;
  align-items: center;
`;

const ZoomMinus = styled.span`
  margin-left: 17px;
  width: 16px;
  font-size: 14px;
  line-height: 14px;
  color: #444;
`;

const ZoomSlider = styled.div`
  position: relative;
  width: 100px;
  height: 1px;
  background: #666;
`;

const ZoomThumb = styled.div`
  position: absolute;
  left: 53px;
  top: -5px;
  width: 5px;
  height: 11px;
  background: #666;
`;

const ZoomPlus = styled.span`
  width: 14px;
  margin-left: 1px;
  font-size: 15px;
  line-height: 14px;
  color: #444;
`;

const ZoomValue = styled.span`
  margin-left: 11px;
  width: 44px;
  white-space: nowrap;
`;

const StatusGlyph = styled.svg`
  margin-left: ${(p) => p.$ml}px;
`;

const BottomEdge = styled.div`
  height: 2px;
  flex: none;
  background: #1f1f1f;
`;

export default App;
